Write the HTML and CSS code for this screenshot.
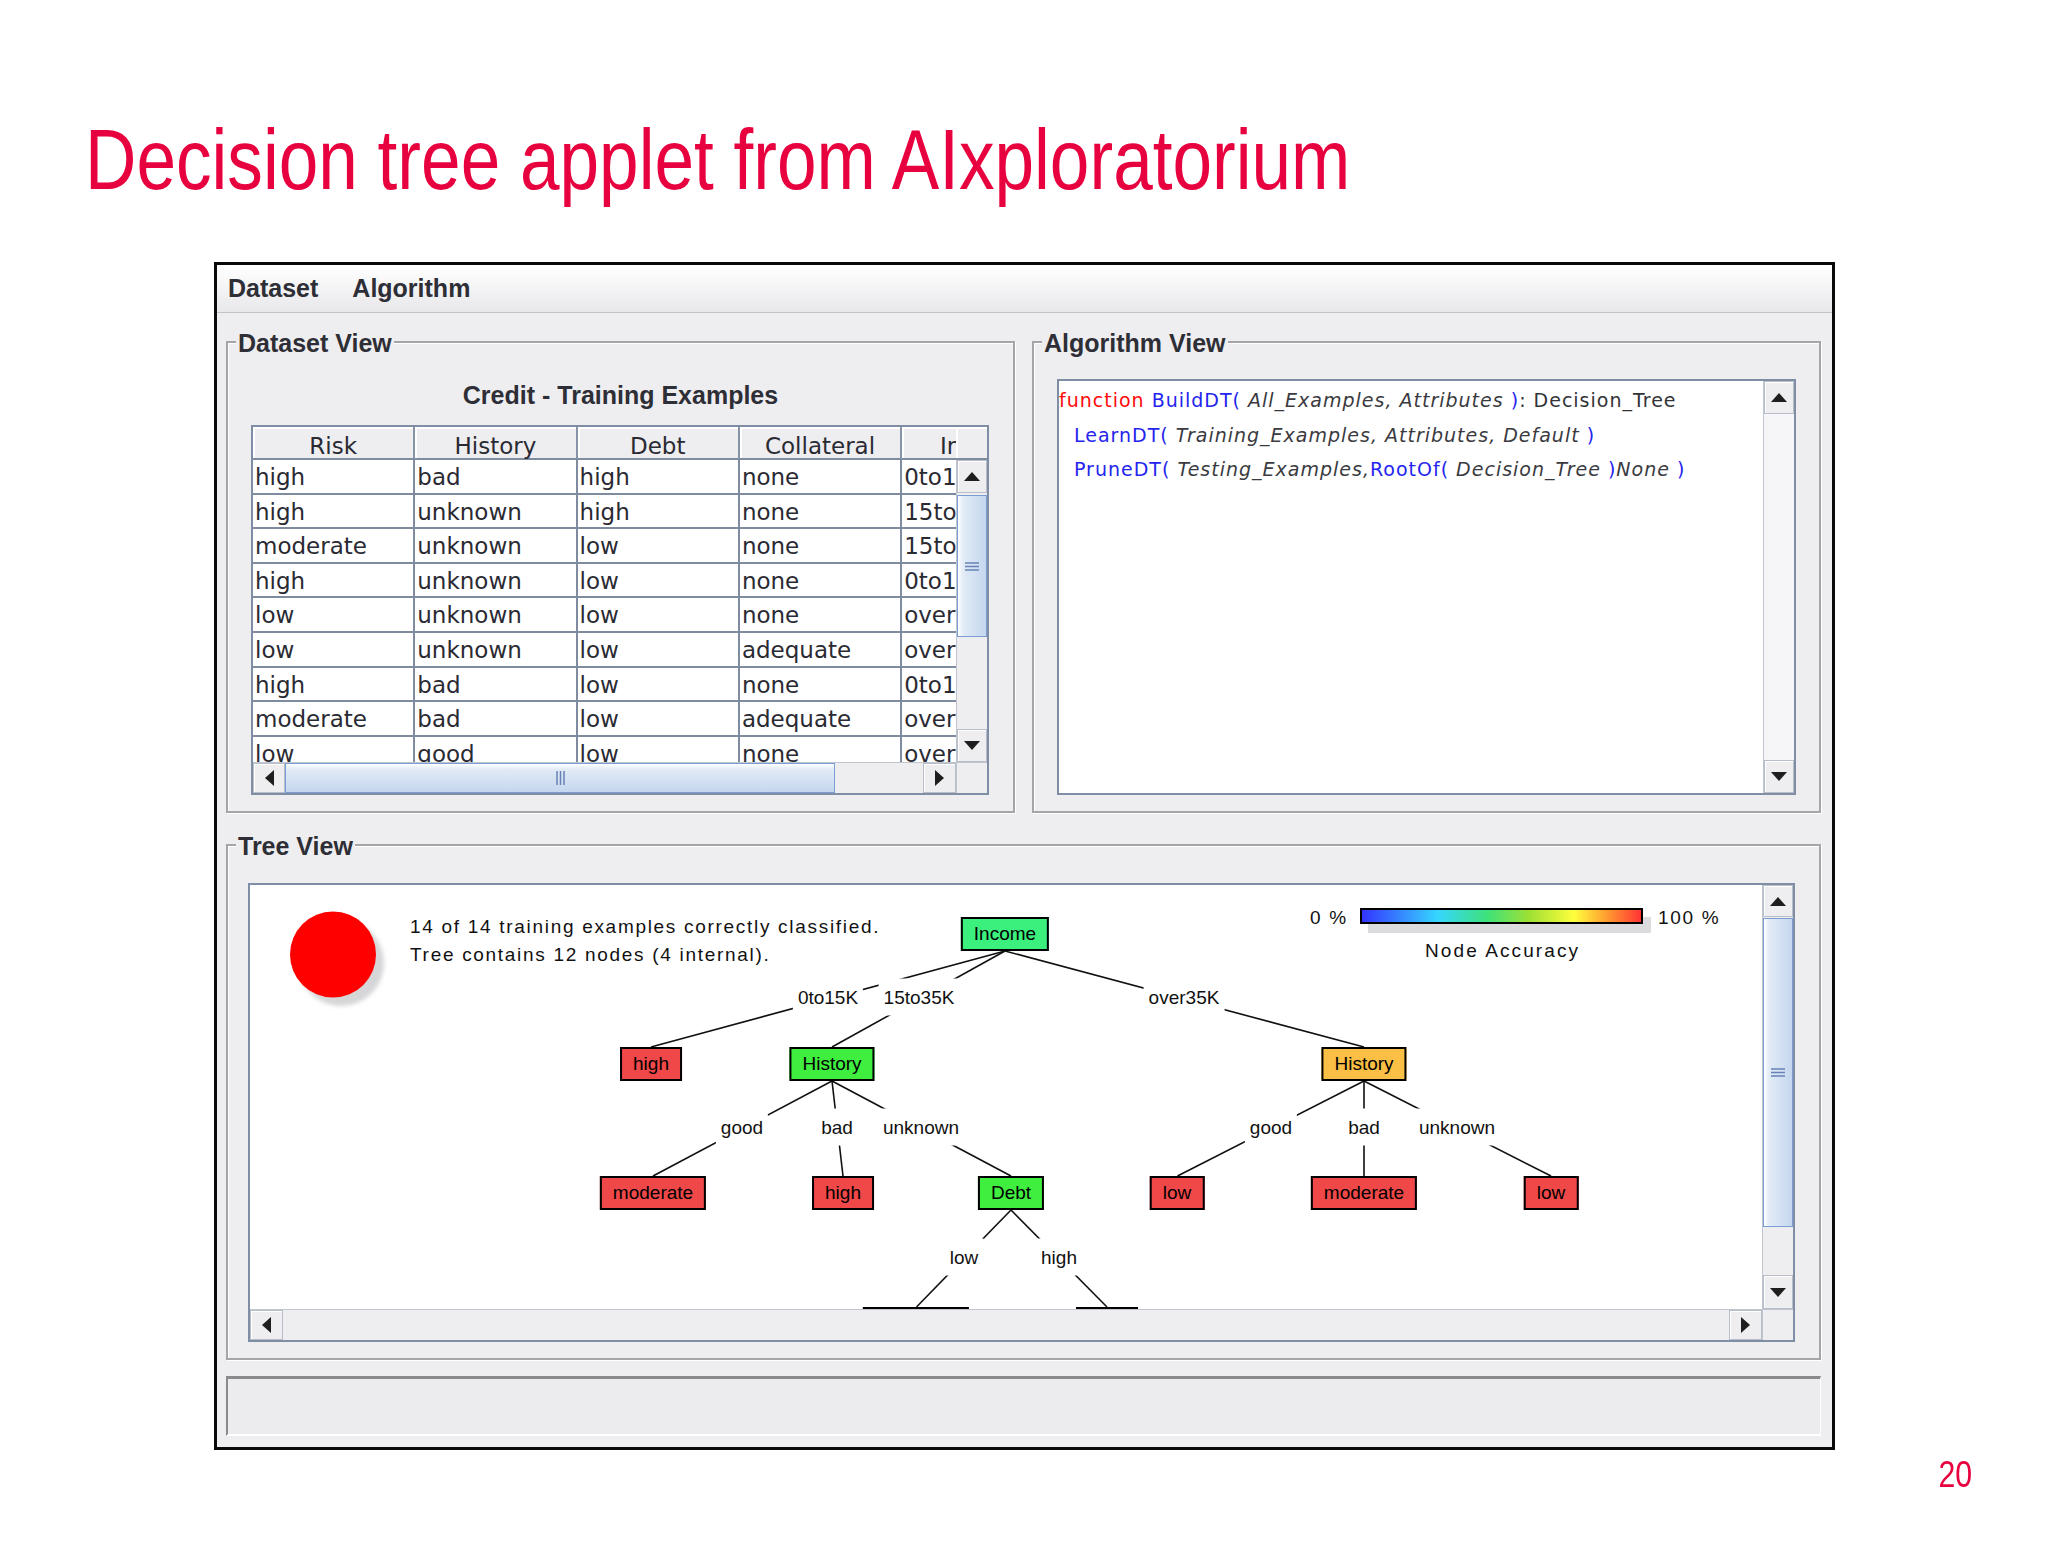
FILE: index.html
```html
<!DOCTYPE html>
<html lang="en">
<head>
<meta charset="utf-8">
<title>Decision tree applet from AIxploratorium</title>
<link rel="stylesheet" href="styles.css">
</head>
<body>
<h1 class="slide-title"><span>Decision tree applet from AIxploratorium</span></h1>

<div class="window">
  <div class="menubar">
    <span class="menu">Dataset</span>
    <span class="menu">Algorithm</span>
  </div>

  <div class="content">
    <div class="top-row">
      <section class="group">
        <span class="group-title">Dataset View</span>
        <div class="table-title">Credit - Training Examples</div>
        <div class="pane table-pane">
          <div class="thead">
            <div class="thead-cols">
              <div class="th">Risk</div>
              <div class="th">History</div>
              <div class="th">Debt</div>
              <div class="th">Collateral</div>
              <div class="th">Income</div>
            </div>
            <div class="th-corner"></div>
          </div>
          <div class="tbody-wrap">
            <div class="viewport">
              <div class="tr"><div class="td">high</div><div class="td">bad</div><div class="td">high</div><div class="td">none</div><div class="td">0to15K</div></div>
              <div class="tr"><div class="td">high</div><div class="td">unknown</div><div class="td">high</div><div class="td">none</div><div class="td">15to35K</div></div>
              <div class="tr"><div class="td">moderate</div><div class="td">unknown</div><div class="td">low</div><div class="td">none</div><div class="td">15to35K</div></div>
              <div class="tr"><div class="td">high</div><div class="td">unknown</div><div class="td">low</div><div class="td">none</div><div class="td">0to15K</div></div>
              <div class="tr"><div class="td">low</div><div class="td">unknown</div><div class="td">low</div><div class="td">none</div><div class="td">over35K</div></div>
              <div class="tr"><div class="td">low</div><div class="td">unknown</div><div class="td">low</div><div class="td">adequate</div><div class="td">over35K</div></div>
              <div class="tr"><div class="td">high</div><div class="td">bad</div><div class="td">low</div><div class="td">none</div><div class="td">0to15K</div></div>
              <div class="tr"><div class="td">moderate</div><div class="td">bad</div><div class="td">low</div><div class="td">adequate</div><div class="td">over35K</div></div>
              <div class="tr"><div class="td">low</div><div class="td">good</div><div class="td">low</div><div class="td">none</div><div class="td">over35K</div></div>
            </div>
            <div class="vsb">
              <div class="sb-btn btn-v-up"><svg width="16" height="9" viewBox="0 0 16 9"><path d="M0 9L8 0L16 9Z"/></svg></div>
              <div class="vthumb tbl-vthumb"><svg width="14" height="9" viewBox="0 0 14 9"><path d="M0 1h14M0 4.5h14M0 8h14"/></svg></div>
              <div class="sb-track"></div>
              <div class="sb-btn btn-v-down"><svg width="16" height="9" viewBox="0 0 16 9"><path d="M0 0L8 9L16 0Z"/></svg></div>
            </div>
          </div>
          <div class="hsb-row">
            <div class="hsb">
              <div class="sb-btn btn-h-left"><svg width="9" height="16" viewBox="0 0 9 16"><path d="M9 0L0 8L9 16Z"/></svg></div>
              <div class="hthumb tbl-hthumb"><svg width="9" height="14" viewBox="0 0 9 14"><path d="M1 0v14M4.5 0v14M8 0v14"/></svg></div>
              <div class="sb-track"></div>
              <div class="sb-btn btn-h-right"><svg width="9" height="16" viewBox="0 0 9 16"><path d="M0 0L9 8L0 16Z"/></svg></div>
            </div>
            <div class="corner"></div>
          </div>
        </div>
      </section>

      <section class="group">
        <span class="group-title">Algorithm View</span>
        <div class="pane algo-pane">
          <div class="algo-text">
            <div class="algo-line"><span class="kw">function</span> <span class="fn">BuildDT(</span> <span class="arg">All_Examples, Attributes</span> <span class="fn">)</span>: Decision_Tree</div>
            <div class="algo-line indent"><span class="fn">LearnDT(</span> <span class="arg">Training_Examples, Attributes, Default</span> <span class="fn">)</span></div>
            <div class="algo-line indent"><span class="fn">PruneDT(</span> <span class="arg">Testing_Examples,</span><span class="fn">RootOf(</span> <span class="arg">Decision_Tree</span> <span class="fn">)</span><span class="arg">None</span> <span class="fn">)</span></div>
          </div>
          <div class="vsb algo-vsb">
            <div class="sb-btn btn-v-up"><svg width="16" height="9" viewBox="0 0 16 9"><path d="M0 9L8 0L16 9Z"/></svg></div>
            <div class="sb-track light-track"></div>
            <div class="sb-btn btn-v-down"><svg width="16" height="9" viewBox="0 0 16 9"><path d="M0 0L8 9L16 0Z"/></svg></div>
          </div>
        </div>
      </section>
    </div>

    <section class="group tree-group">
      <span class="group-title">Tree View</span>
      <div class="pane tree-pane">
        <div class="tree-main">
          <div class="canvas">
            <svg class="edges" width="1512" height="424" viewBox="0 0 1512 424">
              <defs>
                <filter id="soft" x="-20%" y="-20%" width="140%" height="140%"><feGaussianBlur stdDeviation="2"/></filter>
              </defs>
              <circle cx="91" cy="78" r="43" fill="#d6d6d8" filter="url(#soft)"/>
              <circle cx="83" cy="69.5" r="43" fill="#ff0000"/>
              <g stroke="#111" stroke-width="1.6" fill="none">
                <line x1="755" y1="66" x2="401" y2="162"/>
                <line x1="755" y1="66" x2="582" y2="162"/>
                <line x1="755" y1="66" x2="1114" y2="162"/>
                <line x1="582" y1="196" x2="403" y2="291"/>
                <line x1="582" y1="196" x2="593" y2="291"/>
                <line x1="582" y1="196" x2="761" y2="291"/>
                <line x1="1114" y1="196" x2="927.5" y2="291"/>
                <line x1="1114" y1="196" x2="1114" y2="291"/>
                <line x1="1114" y1="196" x2="1301" y2="291"/>
                <line x1="761" y1="325" x2="666.5" y2="422"/>
                <line x1="761" y1="325" x2="857" y2="422"/>
              </g>
            </svg>

            <div class="tree-stats">
              <div>14 of 14 training examples correctly classified.</div>
              <div>Tree contains 12 nodes (4 internal).</div>
            </div>

            <span class="legend-lbl" style="left:1060px;top:22px">0 %</span>
            <div class="acc-bar"></div>
            <span class="legend-lbl" style="left:1408px;top:22px">100 %</span>
            <span class="legend-lbl legend-name" style="left:1175px;top:55px">Node Accuracy</span>

            <span class="elabel" style="left:578px;top:114px">0to15K</span>
            <span class="elabel" style="left:669px;top:114px">15to35K</span>
            <span class="elabel" style="left:934px;top:114px">over35K</span>
            <span class="elabel" style="left:492px;top:244px">good</span>
            <span class="elabel" style="left:587px;top:244px">bad</span>
            <span class="elabel" style="left:671px;top:244px">unknown</span>
            <span class="elabel" style="left:1021px;top:244px">good</span>
            <span class="elabel" style="left:1114px;top:244px">bad</span>
            <span class="elabel" style="left:1207px;top:244px">unknown</span>
            <span class="elabel" style="left:714px;top:374px">low</span>
            <span class="elabel" style="left:809px;top:374px">high</span>

            <div class="node mint" style="left:755px;top:32px">Income</div>
            <div class="node red" style="left:401px;top:162px">high</div>
            <div class="node green" style="left:582px;top:162px">History</div>
            <div class="node orange" style="left:1114px;top:162px">History</div>
            <div class="node red" style="left:403px;top:291px">moderate</div>
            <div class="node red" style="left:593px;top:291px">high</div>
            <div class="node green" style="left:761px;top:291px">Debt</div>
            <div class="node red" style="left:927px;top:291px">low</div>
            <div class="node red" style="left:1114px;top:291px">moderate</div>
            <div class="node red" style="left:1301px;top:291px">low</div>
            <div class="node red" style="left:666px;top:422px">moderate</div>
            <div class="node red" style="left:857px;top:422px">high</div>
          </div>
          <div class="vsb">
            <div class="sb-btn btn-v-up tree-up"><svg width="16" height="9" viewBox="0 0 16 9"><path d="M0 9L8 0L16 9Z"/></svg></div>
            <div class="vthumb tree-vthumb"><svg width="14" height="9" viewBox="0 0 14 9"><path d="M0 1h14M0 4.5h14M0 8h14"/></svg></div>
            <div class="sb-track"></div>
            <div class="sb-btn btn-v-down tree-down"><svg width="16" height="9" viewBox="0 0 16 9"><path d="M0 0L8 9L16 0Z"/></svg></div>
          </div>
        </div>
        <div class="hsb-row">
          <div class="hsb tree-hsb">
            <div class="sb-btn btn-h-left"><svg width="9" height="16" viewBox="0 0 9 16"><path d="M9 0L0 8L9 16Z"/></svg></div>
            <div class="sb-track"></div>
            <div class="sb-btn btn-h-right"><svg width="9" height="16" viewBox="0 0 9 16"><path d="M0 0L9 8L0 16Z"/></svg></div>
          </div>
          <div class="corner"></div>
        </div>
      </div>
    </section>

    <div class="statusbar"></div>
  </div>
</div>

<div class="page-num"><span>20</span></div>
</body>
</html>
```

FILE: styles.css
```css
* { box-sizing: border-box; }

html, body {
  margin: 0;
  padding: 0;
  background: #ffffff;
}

body {
  width: 2048px;
  height: 1560px;
  overflow: hidden;
  font-family: "Liberation Sans", Arial, sans-serif;
}

/* ---------- slide ---------- */
.slide-title {
  margin: 0;
  padding: 117px 0 0 85px;
  height: 202px;
  font-weight: normal;
  font-size: 85px;
  line-height: 85px;
  color: #e8013f;
  white-space: nowrap;
}
.slide-title span {
  display: inline-block;
  transform: scaleX(0.837);
  transform-origin: 0 0;
}

.page-num {
  margin-top: 7px;
  padding-right: 76px;
  text-align: right;
  font-size: 36px;
  line-height: 36px;
  color: #e8013f;
}
.page-num span {
  display: inline-block;
  transform: scaleX(0.84);
  transform-origin: 100% 0;
}

/* ---------- applet window ---------- */
.window {
  margin: 60px 0 0 214px;
  width: 1621px;
  border: 3px solid #0a0a0a;
  background: #eeeef0;
}

.menubar {
  height: 48px;
  display: flex;
  padding-left: 11px;
  background: linear-gradient(#ffffff, #e8e8eb);
  border-bottom: 1px solid #c2c2c6;
  font-weight: bold;
  font-size: 25px;
  line-height: 47px;
  color: #2e2e36;
}
.menu + .menu { margin-left: 34px; }

.content {
  padding: 28px 11px 11px 9px;
}

.top-row {
  display: flex;
  gap: 17px;
  height: 472px;
}

.group {
  position: relative;
  border: 2px solid #a4a4a9;
  box-shadow: inset 1px 1px 0 #ffffff, 1px 1px 0 #ffffff;
}
.top-row .group { width: 789px; }

.group-title {
  position: absolute;
  left: 8px;
  top: -13px;
  padding: 0 2px;
  background: #eeeef0;
  font-weight: bold;
  font-size: 25px;
  line-height: 26px;
  color: #2e2e36;
  white-space: nowrap;
}

.pane {
  border: 2px solid #7f8ea4;
  background: #eeeef0;
}

/* ---------- dataset table ---------- */
.table-title {
  margin-top: 37px;
  height: 30px;
  text-align: center;
  font-weight: bold;
  font-size: 25px;
  line-height: 30px;
  color: #2e2e36;
}

.table-pane {
  margin: 15px 0 0 23px;
  width: 738px;
  height: 370px;
  display: flex;
  flex-direction: column;
}

.thead {
  display: flex;
  height: 33px;
  flex: none;
}
.thead-cols {
  width: 703px;
  overflow: hidden;
  display: grid;
  grid-template-columns: repeat(5, 162.3px);
}
.th {
  height: 33px;
  padding-top: 7px;
  border-right: 2px solid #8794a8;
  border-bottom: 2px solid #7f8ca0;
  background: #eeeef0;
  box-shadow: inset 2px 2px 0 #ffffff;
  text-align: center;
  font-family: "DejaVu Sans", sans-serif;
  font-size: 23px;
  line-height: 24px;
  color: #2a2a33;
  white-space: nowrap;
}
.th-corner {
  width: 31px;
  border-bottom: 2px solid #7f8ca0;
  background: #eeeef0;
  box-shadow: inset 2px 2px 0 #ffffff;
}

.tbody-wrap {
  display: flex;
  height: 302px;
  flex: none;
}
.viewport {
  width: 703px;
  overflow: hidden;
  background: #ffffff;
}
.tr {
  display: grid;
  grid-template-columns: repeat(5, 162.3px);
}
.td {
  height: 34.6px;
  padding: 3px 0 0 2px;
  border-right: 2px solid #7f8ca0;
  border-bottom: 2px solid #7f8ca0;
  font-family: "DejaVu Sans", sans-serif;
  font-size: 23px;
  line-height: 29px;
  color: #2a2a33;
  white-space: nowrap;
  overflow: hidden;
}

/* ---------- scrollbars ---------- */
.vsb {
  width: 31px;
  flex: none;
  display: flex;
  flex-direction: column;
  background: #eeeef0;
  border-left: 1px solid #c0c6d0;
}
.sb-btn {
  flex: none;
  display: flex;
  align-items: center;
  justify-content: center;
  background: #eeeef0;
  border: 1px solid #b7bec9;
  box-shadow: inset 1px 1px 0 #ffffff;
}
.sb-btn svg path { fill: #1e1e1e; }
.btn-v-up, .btn-v-down { height: 33px; }
.btn-h-left { width: 32px; }
.btn-h-right { width: 33px; }
.sb-track { flex: 1; background: #eeeef0; }
.light-track { background: #f6f6f8; }

.vthumb {
  flex: none;
  display: flex;
  align-items: center;
  justify-content: center;
  border: 1px solid #7b9dd3;
  background: linear-gradient(to right, #ffffff 0%, #e2ebf6 18%, #c4d7ee 100%);
}
.hthumb {
  flex: none;
  display: flex;
  align-items: center;
  justify-content: center;
  border: 1px solid #7b9dd3;
  background: linear-gradient(to bottom, #ffffff 0%, #e2ebf6 18%, #c4d7ee 100%);
}
.vthumb svg path, .hthumb svg path {
  stroke: #6783b6;
  stroke-width: 1.5;
}
.tbl-vthumb { margin-top: 2px; height: 142px; }
.tbl-hthumb { width: 550px; }

.hsb-row {
  display: flex;
  height: 31px;
  flex: none;
}
.hsb {
  width: 703px;
  display: flex;
  background: #eeeef0;
  border-top: 1px solid #c0c6d0;
}
.corner {
  width: 31px;
  background: #eeeef0;
  border-left: 1px solid #c0c6d0;
  border-top: 1px solid #c0c6d0;
}

/* ---------- algorithm view ---------- */
.algo-pane {
  margin: 36px 0 0 23px;
  width: 739px;
  height: 416px;
  display: flex;
}
.algo-text {
  flex: 1;
  background: #ffffff;
  padding-top: 2px;
  font-family: "DejaVu Sans", sans-serif;
  font-size: 19px;
  line-height: 34.5px;
  letter-spacing: 1px;
  color: #333338;
  white-space: nowrap;
  overflow: hidden;
}
.algo-line.indent { padding-left: 15px; }
.kw { color: #ff0a0a; }
.fn { color: #2424ee; }
.arg { font-style: italic; color: #3a3a40; }

/* ---------- tree view ---------- */
.tree-group {
  margin-top: 31px;
  height: 516px;
}
.tree-pane {
  margin: 37px 0 0 20px;
  width: 1547px;
  height: 459px;
  display: flex;
  flex-direction: column;
}
.tree-main {
  display: flex;
  height: 424px;
  flex: none;
}
.canvas {
  position: relative;
  width: 1512px;
  overflow: hidden;
  background: #ffffff;
}
.edges {
  position: absolute;
  left: 0;
  top: 0;
}
.tree-up { height: 32px; }
.tree-down { height: 34px; }
.tree-vthumb { margin-top: 1px; height: 309px; }
.tree-hsb { width: 1512px; }
.tree-hsb .btn-h-left, .tree-hsb .btn-h-right { width: 33px; }

.tree-stats {
  position: absolute;
  left: 160px;
  top: 28px;
  font-size: 19px;
  line-height: 28px;
  letter-spacing: 1.7px;
  color: #111111;
  white-space: nowrap;
}

.legend-lbl {
  position: absolute;
  font-size: 19px;
  line-height: 22px;
  letter-spacing: 1.7px;
  color: #111111;
  white-space: nowrap;
}
.legend-name { letter-spacing: 2.1px; }

.acc-bar {
  position: absolute;
  left: 1110px;
  top: 23px;
  width: 283px;
  height: 16px;
  border: 2px solid #000000;
  background: linear-gradient(to right, #3434ff 0%, #36d6ff 27%, #3ee27a 45%, #9fe034 60%, #ffff3c 76%, #ff9a30 88%, #ff3434 100%);
  box-shadow: 8px 9px 0 #dcdcde;
}

.elabel {
  position: absolute;
  transform: translate(-50%, -50%);
  margin-top: -2px;
  padding: 8px 5px;
  background: #ffffff;
  font-size: 19px;
  line-height: 21px;
  color: #111111;
  white-space: nowrap;
}

.node {
  position: absolute;
  transform: translateX(-50%);
  height: 34px;
  padding: 0 11px;
  border: 2px solid #000000;
  font-size: 19px;
  line-height: 30px;
  color: #000000;
  white-space: nowrap;
}
.node.red { background: #f04848; }
.node.green { background: #40ee40; }
.node.mint { background: #3cf07e; }
.node.orange { background: #fbbf45; }

/* ---------- status bar ---------- */
.statusbar {
  margin-top: 16px;
  height: 60px;
  border-top: 3px solid #8a8a8e;
  border-left: 2px solid #8a8a8e;
  border-right: 1px solid #ffffff;
  border-bottom: 2px solid #ffffff;
  background: #ececef;
}
```
